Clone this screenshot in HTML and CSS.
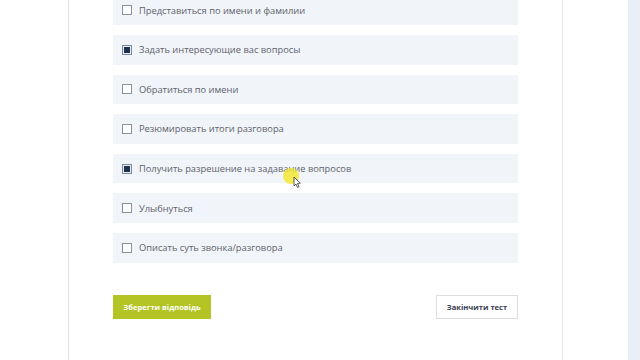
FILE: index.html
```html
<!DOCTYPE html>
<html lang="ru">
<head>
<meta charset="utf-8">
<link rel="stylesheet" href="styles.css">
</head>
<body>
<div class="page">
  <div class="gutter"></div>
  <main class="card">
    <ul class="options">
      <li class="option"><span class="box"></span><span>Представиться по имени и фамилии</span></li>
      <li class="option"><span class="box checked"></span><span>Задать интересующие вас вопросы</span></li>
      <li class="option"><span class="box"></span><span>Обратиться по имени</span></li>
      <li class="option"><span class="box"></span><span>Резюмировать итоги разговора</span></li>
      <li class="option"><span class="box checked"></span><span>Получить разрешение на задавание вопросов</span></li>
      <li class="option"><span class="box"></span><span>Улыбнуться</span></li>
      <li class="option"><span class="box"></span><span>Описать суть звонка/разговора</span></li>
    </ul>
    <div class="actions">
      <button class="btn btn-save">Зберегти відповідь</button>
      <button class="btn btn-finish">Закінчити тест</button>
    </div>
  </main>
  <div class="space"></div>
  <div class="strip"></div>
</div>
<svg class="cursor" width="24" height="24" viewBox="0 0 24 24">
  <circle cx="8" cy="8" r="8" fill="#f2e62e" opacity="0.82"/>
  <path d="M11 9 L11 18 L13 16 L14.6 19.5 L16 18.8 L14.5 15.4 L17.3 15.2 Z" fill="#fff" stroke="#333" stroke-width="0.8" stroke-linejoin="round"/>
</svg>
</body>
</html>
```
FILE: styles.css
```css
html, body {
  margin: 0;
  padding: 0;
  background: #ffffff;
  width: 640px;
  height: 360px;
  overflow: hidden;
  font-family: "Open Sans", "Liberation Sans", sans-serif;
}
.page {
  display: flex;
  height: 360px;
}
.gutter {
  width: 68px;
  flex: none;
}
.card {
  width: 405px;
  flex: none;
  border-left: 1px solid #e4e4e6;
  border-right: 1px solid #e4e4e6;
  padding: 0 44px;
  box-sizing: content-box;
}
.options {
  list-style: none;
  margin: -4.6px 0 0 0;
  padding: 0;
  display: flex;
  flex-direction: column;
  gap: 10px;
}
.option {
  height: 29.6px;
  background: #f1f4f8;
  display: flex;
  align-items: center;
  gap: 7px;
  padding-left: 9px;
  font-size: 9.3px;
  color: #5d626d;
}
.box {
  width: 8px;
  height: 8px;
  border: 1px solid #8a8f98;
  background: #fff;
  flex: none;
}
.box.checked {
  background: #1c3350;
  border-color: #7b8899;
  box-shadow: inset 0 0 0 1px #e8edf3;
}
.actions {
  display: flex;
  justify-content: space-between;
  margin-top: 32px;
}
.btn {
  height: 24px;
  font-family: "Open Sans", "Liberation Sans", sans-serif;
  font-size: 7.6px;
  font-weight: 700;
  padding: 0;
  cursor: pointer;
}
.btn-save {
  width: 98px;
  background: #b4c425;
  border: none;
  color: #ffffff;
}
.btn-finish {
  width: 82px;
  background: #ffffff;
  border: 1px solid #dcdde0;
  color: #3a4150;
}
.space {
  width: 65px;
  flex: none;
}
.strip {
  flex: 1;
  background: #e9eef7;
}
.cursor {
  position: absolute;
  left: 283px;
  top: 168px;
}
```
